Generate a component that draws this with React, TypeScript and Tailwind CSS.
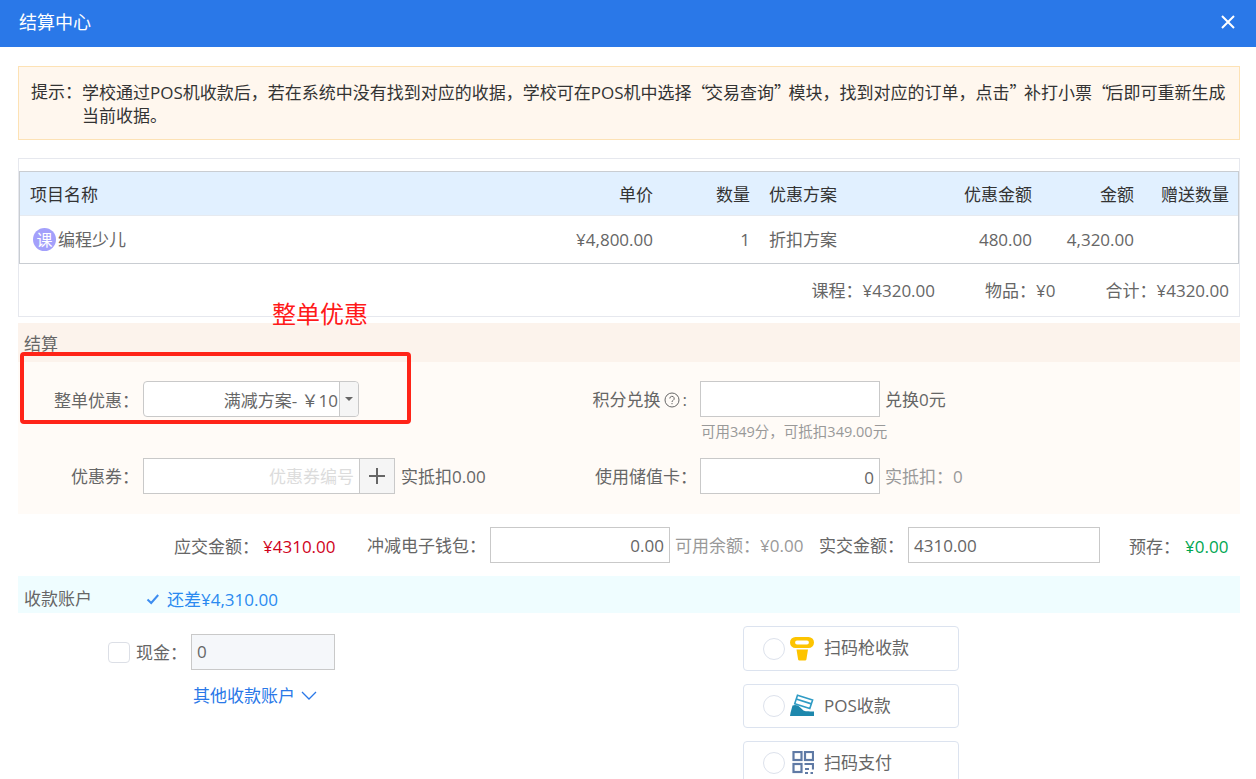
import React from "react";

const font = '"Open Sans", "Noto Sans CJK SC", sans-serif';

function Q({ c }: { c: string }) {
  return <span className="font-['Noto_Sans_CJK_SC'] tracking-[-2.5px]">{c}</span>;
}

function ScanIcon() {
  return (
    <svg width="24" height="24" viewBox="0 0 24 24">
      <path fillRule="evenodd" fill="#fdc400" d="M5.5 0h13a5.5 5.5 0 0 1 0 11h-13a5.5 5.5 0 0 1 0-11zM7 3.6a1.9 1.9 0 0 0 0 3.8h10a1.9 1.9 0 0 0 0-3.8z" />
      <path fill="#fdc400" d="M6.5 12.5h11.5l-1.6 10a1.3 1.3 0 0 1-1.3 1H9.4a1.3 1.3 0 0 1-1.3-1z" />
    </svg>
  );
}

function PosIcon() {
  return (
    <svg width="24" height="24" viewBox="0 0 24 24">
      <path fill="#fff" stroke="#2f9bc4" strokeWidth="1.6" d="M7.5 1.2 22.6 6 19.8 14.6 4.7 9.8z" />
      <path stroke="#2f9bc4" strokeWidth="1.8" fill="none" d="M6.2 5 21.4 9.8" />
      <path fill="#1e88ad" d="M2.5 11.5C5 10.5 8 11 10 13.2l3.5 3.3c1.2.9 5 .8 10.5 1V22H0l.6-3.5z" />
    </svg>
  );
}

function QrIcon() {
  return (
    <svg width="24" height="24" viewBox="0 0 24 24" fill="none" stroke="#5f7aa5" strokeWidth="2.2">
      <rect x="3.5" y="1" width="8" height="8" />
      <rect x="15" y="1" width="8" height="8" />
      <rect x="3.5" y="13" width="8" height="8" />
      <path d="M14.5 13H23V18.5M15 18h4M15 22h3M20.5 22H23" />
    </svg>
  );
}

function PayButton({ icon, label }: { icon: React.ReactNode; label: string }) {
  return (
    <div className="flex h-[44.7px] w-[216px] shrink-0 items-center rounded border border-[#dce3ef] bg-white pl-[19px]">
      <span className="h-[22px] w-[22px] rounded-full border border-[#dde2ec]" />
      <span className="ml-[5px] flex w-[24px] items-center justify-center">{icon}</span>
      <span className="ml-[10px] pb-[1px] text-[#666]">{label}</span>
    </div>
  );
}

export default function App() {
  return (
    <div className="relative h-[779px] overflow-hidden bg-white text-[17px] leading-[24px] text-[#666]" style={{ fontFamily: font }}>
      <header className="flex h-[47px] items-center justify-between bg-[#2a78e8] pb-[3px] pl-[19px] pr-[20px] text-[18px] text-white">
        <span>结算中心</span>
        <svg width="16" height="16" viewBox="0 0 16 16" stroke="#fff" strokeWidth="2" fill="none">
          <path d="M2 2l12 12M14 2 2 14" />
        </svg>
      </header>

      <main className="pl-[18px] pr-[16px]">
        <div className="mt-[19px] flex h-[74px] items-center border border-[#fde2b5] bg-[#fff7ee] pl-[12px] pr-[12px] text-[#333]">
          <span className="w-[51px] shrink-0 self-start pt-[13px]">提示：</span>
          <div className="self-start whitespace-nowrap pt-[13px] leading-[23px]">
            <div>
              学校通过POS机收款后，若在系统中没有找到对应的收据，学校可在POS机中选择<Q c="“" />交易查询<Q c="”" />模块，找到对应的订单，点击<Q c="”" />补打小票<Q c="“" />后即可重新生成
            </div>
            <div>当前收据。</div>
          </div>
        </div>

        <section className="mt-[18px] h-[159px] border border-[#e6e8ee] pt-[12px]">
          <div className="border border-[#c9cdd2]">
            <div className="flex h-[44px] items-center border-b border-[#e6eaf0] bg-[#e1f0ff] pt-[2px] text-[#333]">
              <span className="w-[539px] pl-[10px]">项目名称</span>
              <span className="w-[94px] text-right">单价</span>
              <span className="w-[97px] text-right">数量</span>
              <span className="w-[120px] pl-[19px]">优惠方案</span>
              <span className="w-[162px] text-right">优惠金额</span>
              <span className="w-[102px] text-right">金额</span>
              <span className="w-[95px] text-right">赠送数量</span>
            </div>
            <div className="flex h-[47px] items-center">
              <span className="flex w-[539px] items-center pl-[13px]">
                <span className="mr-[2px] flex h-[23px] w-[23px] items-center justify-center rounded-full bg-[#a3a0fb] text-[16px] text-white">课</span>
                编程少儿
              </span>
              <span className="w-[94px] text-right">¥4,800.00</span>
              <span className="w-[97px] text-right">1</span>
              <span className="w-[120px] pl-[19px]">折扣方案</span>
              <span className="w-[162px] text-right">480.00</span>
              <span className="w-[102px] text-right">4,320.00</span>
            </div>
          </div>
          <div className="flex h-[53px] items-center justify-end pr-[10px]">
            <span>课程：¥4320.00</span>
            <span className="ml-[50px]">物品：¥0</span>
            <span className="ml-[50px]">合计：¥4320.00</span>
          </div>
        </section>

        <section className="mt-[6px] h-[191px] bg-[#fffbf7]">
          <div className="flex h-[39px] items-center bg-[#fcf3ec] pl-[6px] pt-[3px]">结算</div>
          <div className="flex pt-[19px]">
            <div className="w-[574px]">
              <div className="flex h-[36px] items-center">
                <span className="w-[121px] pt-[3px] text-right">整单优惠：</span>
                <div className="ml-[4px] flex h-[36px] w-[216px] rounded border border-[#c9c9c9] bg-white">
                  <span className="flex flex-1 items-center justify-end pr-[1px] pt-[3px]">满减方案- ￥10</span>
                  <span className="flex w-[19px] items-center justify-center rounded-r border-l border-[#c9c9c9] bg-[#f5f5f5]">
                    <span className="border-x-[4px] border-t-[4px] border-x-transparent border-t-[#666]" />
                  </span>
                </div>
              </div>
              <div className="mt-[41px] flex h-[36px] items-center">
                <span className="w-[121px] pt-[2px] text-right">优惠券：</span>
                <div className="ml-[4px] flex h-[36px] w-[252px] border border-[#c9c9c9] bg-white">
                  <span className="flex w-[215px] items-center justify-end pr-[5px] pt-[2px] text-[#dcdcdc]">优惠券编号</span>
                  <span className="flex flex-1 items-center justify-center border-l border-[#c9c9c9] bg-[#f5f5f5]">
                    <svg width="18" height="18" viewBox="0 0 18 18" stroke="#666" strokeWidth="2"><path d="M9 1v16M1 9h16" /></svg>
                  </span>
                </div>
                <span className="ml-[6px] pt-[2px]">实抵扣0.00</span>
              </div>
            </div>
            <div>
              <div className="flex h-[36px] items-center">
                <span className="flex w-[95px] items-center justify-end whitespace-nowrap pt-[2px]">
                  积分兑换
                  <svg className="ml-[3px] mr-[3px]" width="16" height="16" viewBox="0 0 16 16" fill="none" stroke="#666">
                    <circle cx="8" cy="8" r="7" />
                    <path d="M5.8 6.5a2.2 2.2 0 1 1 3.3 1.9c-.8.4-1.1.9-1.1 1.6M8 11v1.2" />
                  </svg>
                  :
                </span>
                <span className="ml-[13px] h-[36px] w-[180px] border border-[#c9c9c9] bg-white" />
                <span className="ml-[5px] pt-[2px]">兑换0元</span>
              </div>
              <div className="ml-[109px] mt-[6px] h-[17px] text-[14.5px] leading-[17px] text-[#999]">可用349分，可抵扣349.00元</div>
              <div className="mt-[18px] flex h-[36px] items-center">
                <span className="w-[105px] whitespace-nowrap pt-[2px] text-right">使用储值卡：</span>
                <span className="ml-[3px] flex h-[36px] w-[180px] items-center justify-end border border-[#c9c9c9] bg-white pr-[5px] pt-[3px]">0</span>
                <span className="ml-[5px] pt-[2px] text-[#999]">实抵扣：0</span>
              </div>
            </div>
          </div>
        </section>

        <section className="mt-[13px] flex h-[36px] items-center whitespace-nowrap pl-[156px]">
          <span className="w-[89px] pt-[3px]">应交金额：</span>
          <span className="w-[73px] pt-[3px] text-[#d0021b]">¥4310.00</span>
          <span className="ml-[31px] w-[123px] pt-[2px]">冲减电子钱包：</span>
          <span className="flex h-[36px] w-[180px] items-center justify-end border border-[#c9c9c9] pr-[5px] pt-[2px]">0.00</span>
          <span className="ml-[5px] w-[144px] pt-[2px] text-[#999]">可用余额：¥0.00</span>
          <span className="w-[89px] pt-[2px]">实交金额：</span>
          <span className="flex h-[36px] w-[192px] items-center border border-[#c9c9c9] pl-[5px] pt-[2px]">4310.00</span>
          <span className="ml-[29px] w-[56px] pt-[3px]">预存：</span>
          <span className="pt-[3px] text-[#00a651]">¥0.00</span>
        </section>

        <section className="mt-[13px] flex h-[37px] items-center bg-[#effdff] pl-[6px]">
          <span className="w-[122px] pt-[8px]">收款账户</span>
          <svg className="mt-[9px]" width="14" height="14" viewBox="0 0 14 14" fill="none" stroke="#3d8df0" strokeWidth="2"><path d="M1.5 7.5 5.2 11l7-8" /></svg>
          <span className="ml-[7px] pt-[10px] text-[#2a8af0]">还差¥4,310.00</span>
        </section>

        <section className="flex">
          <div className="w-[725px] pt-[21px]">
            <div className="flex h-[36px] items-center">
              <span className="ml-[90px] h-[21px] w-[22px] rounded border border-[#dcdfe6]" />
              <span className="ml-[6px] w-[55px] pt-[2px]">现金：</span>
              <span className="flex h-[36px] w-[144px] items-center border border-[#c9c9c9] bg-[#f5f7fa] pl-[5px]">0</span>
            </div>
            <div className="ml-[175px] mt-[14px] flex items-center text-[#2a78e8]">
              其他收款账户
              <svg className="ml-[6px]" width="16" height="10" viewBox="0 0 16 10" fill="none" stroke="#2a78e8" strokeWidth="1.3"><path d="m1 1 7 7 7-7" /></svg>
            </div>
          </div>
          <div className="flex flex-col gap-[12.7px] pt-[13.4px]">
            <PayButton icon={<ScanIcon />} label="扫码枪收款" />
            <PayButton icon={<PosIcon />} label="POS收款" />
            <PayButton icon={<QrIcon />} label="扫码支付" />
          </div>
        </section>
      </main>

      <span className="absolute left-[272px] top-[297px] text-[24px] leading-[34px] text-[#ff1a1a]">整单优惠</span>
      <span className="absolute left-[20px] top-[352px] h-[72px] w-[391px] rounded-[4px] border-[4px] border-[#ff2418]" />
    </div>
  );
}
